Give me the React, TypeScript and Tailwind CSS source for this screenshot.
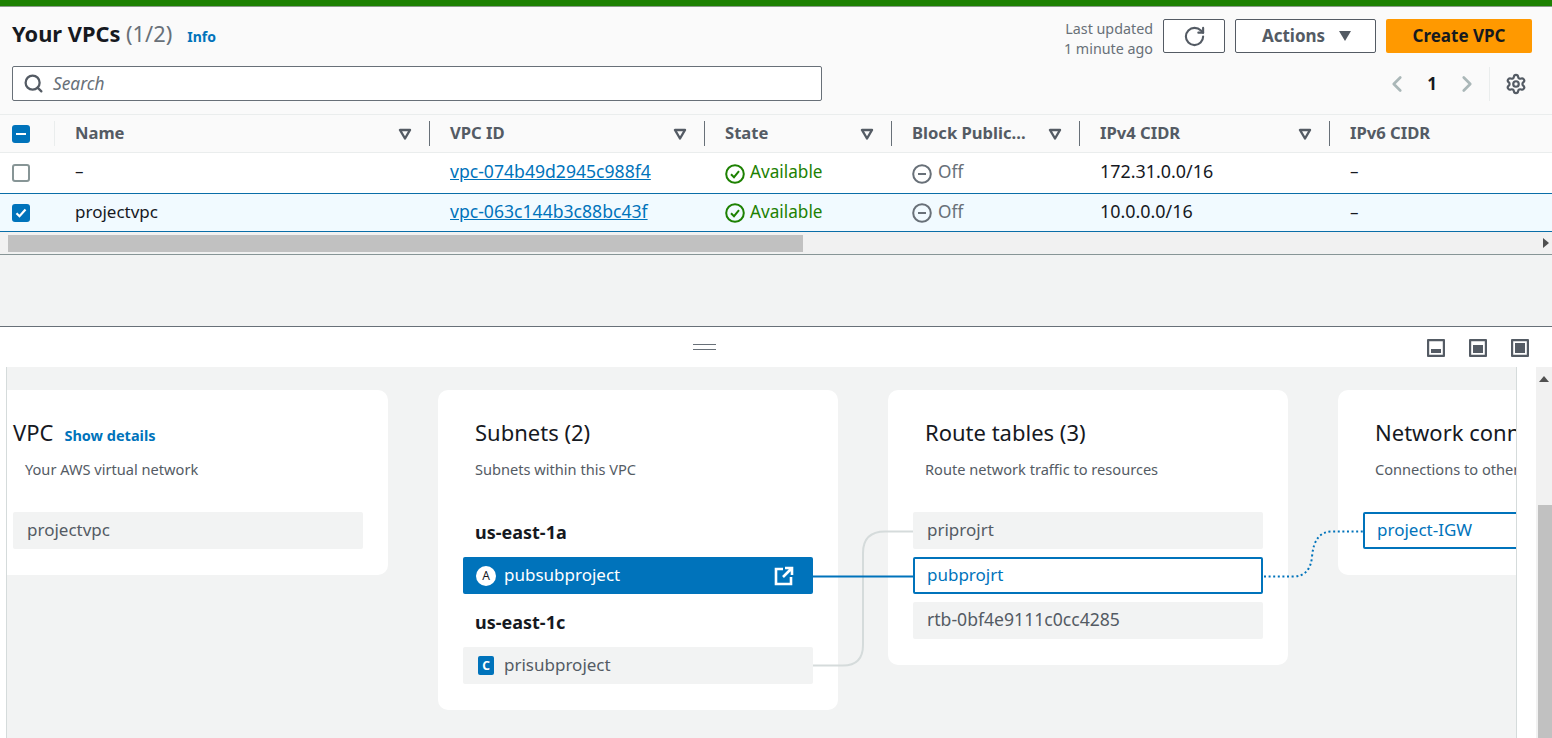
import { ChevronLeft, ChevronRight, RotateCw, Search, Settings } from 'lucide-react';

const gridCols = 'grid grid-cols-[55px_375px_275px_187px_188px_250px_1fr]';

function SortCaret() {
  return (
    <svg width="14" height="12" viewBox="0 0 14 12" className="mr-[18px] shrink-0">
      <path d="M2 2h10L7 10.500z" fill="none" stroke="#545b64" strokeWidth="2.400" strokeLinejoin="round" />
    </svg>
  );
}

function HeaderCell({ label, last }: { label: string; last?: boolean }) {
  return (
    <div className="flex items-center justify-between h-full pl-5 relative">
      <span className="font-bold text-[#545b64] text-[16.6px] whitespace-nowrap">{label}</span>
      {!last && <SortCaret />}
      {!last && <div className="absolute right-0 top-[6px] bottom-[6px] w-px bg-[#687078]" />}
    </div>
  );
}

function StatusOk() {
  return (
    <span className="flex items-center gap-[5px] text-[#1d8102] text-[17.2px]">
      <svg width="20" height="20" viewBox="0 0 20 20" className="mt-1">
        <circle cx="10" cy="10" r="8.800" fill="none" stroke="#1d8102" strokeWidth="2" />
        <path d="M6 10.200l3 3 5-6" fill="none" stroke="#1d8102" strokeWidth="2" />
      </svg>
      Available
    </span>
  );
}

function StatusOff() {
  return (
    <span className="flex items-center gap-[6px] text-[#687078] text-[17.2px]">
      <svg width="20" height="20" viewBox="0 0 20 20" className="mt-1">
        <circle cx="10" cy="10" r="8.800" fill="none" stroke="#687078" strokeWidth="2" />
        <path d="M6 10h8" stroke="#687078" strokeWidth="2" />
      </svg>
      Off
    </span>
  );
}

function Row({ name, id, cidr, selected }: { name: string; id: string; cidr: string; selected?: boolean }) {
  const textPad = selected ? 'pl-5 pb-[2px]' : 'pl-5 pb-[4px]';
  return (
    <div className={`${gridCols} items-center text-[17px] text-[#16191f] shrink-0 ${selected ? 'h-[37px] bg-[#f1faff] border-y border-[#0a6ea8] box-content' : 'h-[40px] bg-white'}`}>
      <div className="pl-3 flex items-center">
        {selected ? (
          <span className="w-[18px] h-[18px] rounded-[3px] bg-[#0073bb] flex items-center justify-center">
            <svg width="14" height="14" viewBox="0 0 14 14">
              <path d="M2.500 7.200l3 3 6-6.600" fill="none" stroke="white" strokeWidth="2.200" />
            </svg>
          </span>
        ) : (
          <span className="w-[18px] h-[18px] rounded-[3px] bg-white border-2 border-[#879596]" />
        )}
      </div>
      <div className={textPad}>{name}</div>
      <div className={textPad}><span className="text-[#0073bb] underline text-[17.6px]">{id}</span></div>
      <div className="pl-5 pb-[2px]"><StatusOk /></div>
      <div className="pl-5 pb-[2px]"><StatusOff /></div>
      <div className={`${textPad} text-[17.9px]`}>{cidr}</div>
      <div className={textPad}>–</div>
    </div>
  );
}

function PanelIcon({ fill }: { fill: 'bottom' | 'middle' | 'full' }) {
  return (
    <svg width="18" height="18" viewBox="0 0 18 18">
      <rect x="1" y="1" width="16" height="16" rx="1" fill="none" stroke="#545b64" strokeWidth="2.400" />
      {fill === 'bottom' && <rect x="4" y="10" width="10" height="4" fill="#545b64" />}
      {fill === 'middle' && <rect x="4" y="6" width="10" height="8" fill="#545b64" />}
      {fill === 'full' && <rect x="4" y="4" width="10" height="10" fill="#545b64" />}
    </svg>
  );
}

function Card({ title, sub, height, children, extra, pad }: { title: string; sub: string; height: string; children: React.ReactNode; extra?: React.ReactNode; pad?: string }) {
  return (
    <div className={`${height} w-[400px] shrink-0 bg-white rounded-[10px] px-[25px] pt-[27px]`}>
      <div className={`${pad ?? 'pl-3'} flex items-baseline gap-[11px] h-[30px]`}>
        <span className="text-[22px] text-[#16191f] leading-[30px] whitespace-nowrap">{title}</span>
        {extra}
      </div>
      <div className="pl-3 mt-[12px] text-[14.6px] leading-[20px] text-[#545b64] whitespace-nowrap">{sub}</div>
      {children}
    </div>
  );
}

function Item({ label, tone, size }: { label: string; tone?: 'plain' | 'outline'; size?: string }) {
  if (tone === 'outline') {
    return (
      <div className="h-[37px] rounded-[2px] border-2 border-[#0073bb] bg-white pl-3 pb-[2px] flex items-center text-[17px] text-[#0073bb]">{label}</div>
    );
  }
  return <div className={`h-[37px] rounded-[2px] bg-[#f2f3f3] pl-[14px] pb-[2px] flex items-center ${size ?? 'text-[17px]'} text-[#545b64]`}>{label}</div>;
}

export default function App() {
  return (
    <div className="w-[1552px] h-[738px] overflow-hidden bg-[#f2f3f3] flex flex-col font-['Noto_Sans','Open_Sans',sans-serif]">
      <div className="h-[7px] shrink-0 bg-[#1d8102] border-b border-[#8a9a8a]" />

      <div className="h-[107px] shrink-0 bg-[#fafafa] px-3 relative">
        <div className="flex items-start justify-between pt-3 pr-[8px]">
          <div className="flex items-baseline gap-[10px] h-[30px] leading-[30px]">
            <span className="text-[21.8px] font-bold text-[#16191f]">Your VPCs <span className="font-normal text-[#687078]">(1/2)</span></span>
            <span className="text-[14px] font-bold text-[#0073bb] ml-[5px]">Info</span>
          </div>
          <div className="flex items-start gap-[10px]">
            <div className="text-right text-[14.3px] leading-[20px] text-[#687078]">Last updated<br />1 minute ago</div>
            <button className="w-[141px] h-[34px] order-2 rounded-[2px] border border-[#545b64] bg-white flex items-center justify-center gap-[13px] pl-[3px] text-[17px] font-bold text-[#545b64]">
              Actions
              <svg width="14" height="10" viewBox="0 0 14 10"><path d="M1 0h12L7 10z" fill="#545b64" /></svg>
            </button>
            <button className="w-[62px] h-[34px] order-1 rounded-[2px] border border-[#545b64] bg-white flex items-center justify-center">
              <RotateCw size={23} color="#545b64" strokeWidth={2.2} />
            </button>
            <button className="w-[146px] h-[34px] order-3 rounded-[2px] bg-[#ff9900] text-[17px] font-bold text-[#16191f]">Create VPC</button>
          </div>
        </div>
        <div className="flex items-center justify-between mt-[7px]">
          <div className="w-[810px] h-[35px] rounded-[2px] border border-[#687078] bg-white flex items-center pl-[10px] gap-[9px]">
            <Search size={21} color="#545b64" strokeWidth={2.6} />
            <span className="italic text-[17.3px] text-[#687078]">Search</span>
          </div>
          <div className="flex items-center h-[34px] pr-[13px]">
            <ChevronLeft size={26} color="#aab7b8" strokeWidth={2.5} />
            <span className="w-[44px] text-center text-[17px] font-bold text-[#16191f]">1</span>
            <ChevronRight size={26} color="#aab7b8" strokeWidth={2.5} />
            <div className="w-px h-[34px] bg-[#eaeded] ml-[9px] mr-[15px]" />
            <Settings size={22} color="#545b64" strokeWidth={2.4} />
          </div>
        </div>
      </div>

      <div className={`${gridCols} h-[39px] shrink-0 items-center bg-[#fafafa] border-y border-[#eaeded]`}>
        <div className="pl-3 flex items-center h-full relative">
          <span className="w-[18px] h-[18px] rounded-[3px] bg-[#0073bb] flex items-center justify-center">
            <span className="w-[10px] h-[2px] bg-white" />
          </span>
          <div className="absolute right-0 top-[6px] bottom-[6px] w-px bg-[#eaeded]" />
        </div>
        <HeaderCell label="Name" />
        <HeaderCell label="VPC ID" />
        <HeaderCell label="State" />
        <HeaderCell label="Block Public..." />
        <HeaderCell label="IPv4 CIDR" />
        <HeaderCell label="IPv6 CIDR" last />
      </div>
      <Row name="–" id="vpc-074b49d2945c988f4" cidr="172.31.0.0/16" />
      <Row name="projectvpc" id="vpc-063c144b3c88bc43f" cidr="10.0.0.0/16" selected />

      <div className="h-[23px] shrink-0 bg-[#f1f1f1] border-b border-[#879596] pt-[3px] pl-[8px] relative">
        <div className="w-[795px] h-[17px] bg-[#c1c1c1]" />
        <svg width="6" height="10" viewBox="0 0 6 10" className="absolute right-[3px] top-[6px]"><path d="M0 0l6 5-6 5z" fill="#505050" /></svg>
      </div>

      <div className="h-[71px] shrink-0 border-b border-[#687078] box-content" />

      <div className="h-[40px] shrink-0 bg-white relative flex items-center justify-end gap-[24px] pr-[23px] pt-px">
        <div className="absolute left-[693px] top-[17px] w-[23px] h-[6px] border-y border-[#687078]" />
        <PanelIcon fill="bottom" />
        <PanelIcon fill="middle" />
        <PanelIcon fill="full" />
      </div>

      <div className="flex-1 min-h-0 flex bg-white">
        <div className="w-[6px] shrink-0" />
        <div className="w-[1511px] shrink-0 relative overflow-hidden bg-[#f2f3f3] border-x border-[#d5dbdb]">
          <div className="flex items-start gap-[50px] ml-[-19px] pt-[23px]">
            <Card
              title="VPC"
              sub="Your AWS virtual network"
              height="h-[185px]"
              pad="pl-0"
              extra={<span className="text-[14.5px] font-bold text-[#0073bb]">Show details</span>}
            >
              <div className="mt-[33px]"><Item label="projectvpc" /></div>
            </Card>
            <Card title="Subnets (2)" sub="Subnets within this VPC" height="h-[320px]">
              <div className="mt-[41px] pl-3 h-[24px] leading-[24px] text-[18px] font-bold text-[#16191f]">us-east-1a</div>
              <div className="mt-[13px] h-[37px] rounded-[2px] bg-[#0073bb] flex items-center pl-[13px] pr-[19px] text-[17px] text-white">
                <span className="w-5 h-5 rounded-full bg-white text-[#16191f] text-[12px] flex items-center justify-center mr-2">A</span>
                <span className="flex-1 pb-[2px]">pubsubproject</span>
                <svg width="20" height="20" viewBox="0 0 20 20" fill="none" stroke="white" strokeWidth="2.600">
                  <path d="M9 3H2v15h15v-7" />
                  <path d="M11 2h7v7M18 2l-9 9" />
                </svg>
              </div>
              <div className="mt-[16px] pl-3 h-[24px] leading-[24px] text-[18px] font-bold text-[#16191f]">us-east-1c</div>
              <div className="mt-[13px] h-[37px] rounded-[2px] bg-[#f2f3f3] flex items-center pl-[15px] text-[17px] text-[#545b64]">
                <span className="w-4 h-[19px] rounded-[2px] bg-[#0073bb] text-white text-[12px] font-bold flex items-center justify-center mr-[10px]">C</span>
                <span className="pb-[2px]">prisubproject</span>
              </div>
            </Card>
            <Card title="Route tables (3)" sub="Route network traffic to resources" height="h-[275px]">
              <div className="mt-[33px] flex flex-col gap-2">
                <Item label="priprojrt" />
                <Item label="pubprojrt" tone="outline" />
                <Item label="rtb-0bf4e9111c0cc4285" size="text-[17.6px]" />
              </div>
            </Card>
            <Card title="Network connections" sub="Connections to other networks" height="h-[185px]">
              <div className="mt-[33px]"><Item label="project-IGW" tone="outline" /></div>
            </Card>
          </div>
          <svg className="absolute left-0 top-0 pointer-events-none" width="1510" height="371" fill="none">
            <path d="M806 298.500H836Q856 298.500 856 278V186Q856 164.500 878 164.500H906" stroke="#d5dbdb" strokeWidth="2" />
            <path d="M806 209.500H906" stroke="#0073bb" strokeWidth="2" />
            <path d="M1257 209.500H1286Q1303 209.500 1305 190Q1307 164.500 1325 164.500H1356" stroke="#0073bb" strokeWidth="2" strokeDasharray="2 2.600" />
          </svg>
        </div>
        <div className="flex-1" />
        <div className="w-4 shrink-0 bg-[#f1f1f1] relative">
          <svg width="10" height="6" viewBox="0 0 10 6" className="absolute left-[3px] top-[9px]"><path d="M0 6l5-6 5 6z" fill="#505050" /></svg>
          <div className="absolute left-[2px] right-0 top-[138px] bottom-0 bg-[#c1c1c1]" />
        </div>
      </div>
    </div>
  );
}
